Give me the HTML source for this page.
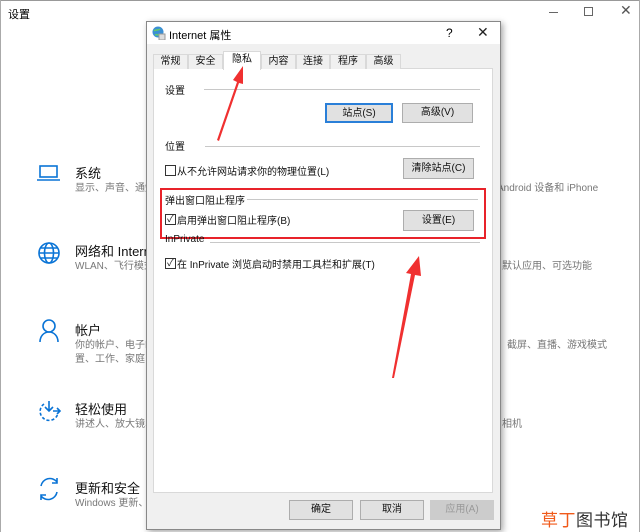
<!DOCTYPE html>
<html><head><meta charset="utf-8"><style>
*{margin:0;padding:0;box-sizing:border-box}
body{width:640px;height:532px;overflow:hidden;background:#fff;font-family:"Liberation Sans","Noto Sans CJK SC",sans-serif;position:relative;color:#000}
.a{position:absolute;white-space:nowrap}
.t{font-size:13px;color:#111}
.s{font-size:10px;color:#777}
.d{font-size:10px;color:#111}
.btn{position:absolute;background:#e1e1e1;border:1px solid #adadad;font-size:10px;text-align:center;color:#111}
.line{position:absolute;height:1px;background:#c8c8c8}
.tab{position:absolute;top:54px;height:15px;border:1px solid #d9d9d9;border-bottom:none;background:#f0f0f0;font-size:10px;text-align:center;line-height:14px;color:#111}
.cb{position:absolute;width:11px;height:11px;border:1px solid #333;background:#fff;font-size:10px;line-height:9px;text-align:center;color:#222}
</style></head><body>
<div class="a" style="left:0;top:0;width:640px;height:1px;background:#999"></div>
<div class="a" style="left:0;top:0;width:1px;height:532px;background:#aaa"></div>
<div class="a" style="left:639px;top:0;width:1px;height:532px;background:#aaa"></div>
<div class="a" style="left:8px;top:6px;font-size:11px">设置</div>
<div class="a" style="left:549px;top:12px;width:9px;height:1px;background:#666"></div>
<div class="a" style="left:584px;top:7px;width:9px;height:9px;border:1px solid #666"></div>
<div class="a" style="left:620px;top:2px;font-size:14px;color:#555">✕</div>

<svg class="a" style="left:36px;top:160px" width="28" height="360" fill="none" stroke="#0a74d6" stroke-width="1.6">
<rect x="4" y="6" width="17" height="11"/><path d="M1 20h23"/>
<g transform="translate(0,80)"><circle cx="13" cy="13" r="10"/><ellipse cx="13" cy="13" rx="4.5" ry="10"/><path d="M3 13h20M5 8h16M5 18h16"/></g>
<g transform="translate(0,158)"><circle cx="13" cy="8" r="6"/><path d="M4 24c0-6 4-10 9-10s9 4 9 10"/></g>
<g transform="translate(0,237)"><path d="M13 4v10M9 10l4 4 4-4M17 14h7M21 11l3 3-3 3"/><path d="M8 7a9 9 0 1 0 14 9" stroke-dasharray="3 2"/></g>
<g transform="translate(0,316)"><path d="M5 10a9 9 0 0 1 16-4M21 2v5h-5M21 16a9 9 0 0 1-16 4M5 24v-5h5"/></g>
</svg>
<div class="a t" style="left:75px;top:163px">系统</div>
<div class="a s" style="left:75px;top:179px">显示、声音、通知</div>
<div class="a t" style="left:75px;top:241px">网络和 Internet</div>
<div class="a s" style="left:75px;top:257px">WLAN、飞行模式</div>
<div class="a t" style="left:75px;top:320px">帐户</div>
<div class="a s" style="left:75px;top:336px">你的帐户、电子邮</div>
<div class="a s" style="left:75px;top:350px">置、工作、家庭</div>
<div class="a t" style="left:75px;top:399px">轻松使用</div>
<div class="a s" style="left:75px;top:415px">讲述人、放大镜、</div>
<div class="a t" style="left:75px;top:478px">更新和安全</div>
<div class="a s" style="left:75px;top:494px">Windows 更新、</div>

<div class="a s" style="left:497px;top:179px">Android 设备和 iPhone</div>
<div class="a s" style="left:502px;top:257px">默认应用、可选功能</div>
<div class="a s" style="left:497px;top:336px">、截屏、直播、游戏模式</div>
<div class="a s" style="left:502px;top:415px">相机</div>
<div class="a" style="left:541px;top:511px;font-size:17px;line-height:20px;letter-spacing:0.5px"><span style="color:#f05a1a">草丁</span><span style="color:#333">图书馆</span></div>

<div class="a" style="left:146px;top:21px;width:355px;height:509px;background:#f0f0f0;border:1px solid #888;box-shadow:2px 2px 6px rgba(0,0,0,.35)"></div>
<div class="a" style="left:147px;top:22px;width:353px;height:22px;background:#fff"></div>
<svg class="a" style="left:152px;top:26px" width="14" height="14"><circle cx="6" cy="6" r="5.5" fill="#3b8fd4"/><path d="M2 5c2-2 4 0 6-2M3 9c2-1 3 1 5-1" stroke="#6c6" stroke-width="1.5" fill="none"/><rect x="7" y="8" width="6" height="6" fill="#ddd" stroke="#999"/></svg>
<div class="a" style="left:169px;top:27px;font-size:11px">Internet 属性</div>
<div class="a" style="left:446px;top:26px;font-size:12px">?</div>
<div class="a" style="left:477px;top:24px;font-size:14px;color:#222">✕</div>

<div class="a" style="left:153px;top:68px;width:340px;height:425px;background:#fff;border:1px solid #d9d9d9"></div>
<div class="tab" style="left:153px;width:35px">常规</div>
<div class="tab" style="left:188px;width:35px">安全</div>
<div class="tab" style="left:261px;width:35px">内容</div>
<div class="tab" style="left:296px;width:34px">连接</div>
<div class="tab" style="left:330px;width:36px">程序</div>
<div class="tab" style="left:366px;width:35px">高级</div>
<div class="tab" style="left:223px;top:51px;width:38px;height:19px;background:#fff;line-height:16px">隐私</div>

<div class="a d" style="left:165px;top:82px">设置</div>
<div class="line" style="left:204px;top:89px;width:276px"></div>
<div class="btn" style="left:325px;top:103px;width:68px;height:20px;line-height:18px;border:2px solid #2a7fd8">站点(S)</div>
<div class="btn" style="left:402px;top:103px;width:71px;height:20px;line-height:18px">高级(V)</div>
<div class="a d" style="left:165px;top:138px">位置</div>
<div class="line" style="left:205px;top:146px;width:275px"></div>
<div class="cb" style="left:165px;top:165px"></div>
<div class="a d" style="left:177px;top:163px">从不允许网站请求你的物理位置(L)</div>
<div class="btn" style="left:403px;top:158px;width:71px;height:21px;line-height:19px">清除站点(C)</div>
<div class="a d" style="left:165px;top:192px">弹出窗口阻止程序</div>
<div class="line" style="left:247px;top:199px;width:231px"></div>
<div class="cb" style="left:165px;top:214px">✓</div>
<div class="a d" style="left:177px;top:212px">启用弹出窗口阻止程序(B)</div>
<div class="btn" style="left:403px;top:210px;width:71px;height:21px;line-height:19px">设置(E)</div>
<div class="a" style="left:160px;top:188px;width:326px;height:51px;border:2px solid #e8232a"></div>
<div class="a d" style="left:165px;top:234px">InPrivate</div>
<div class="line" style="left:210px;top:242px;width:270px"></div>
<div class="cb" style="left:165px;top:258px">✓</div>
<div class="a d" style="left:177px;top:256px">在 InPrivate 浏览启动时禁用工具栏和扩展(T)</div>

<div class="btn" style="left:289px;top:500px;width:64px;height:20px;line-height:18px">确定</div>
<div class="btn" style="left:360px;top:500px;width:64px;height:20px;line-height:18px">取消</div>
<div class="btn" style="left:430px;top:500px;width:64px;height:20px;line-height:18px;color:#999;border-color:#ccc;background:#ccc">应用(A)</div>

<svg class="a" style="left:0;top:0" width="640" height="532">
<path d="M217 140 L237 82 L233 80 L243 66 L243 84 L239 83 L219 141Z" fill="#f03030"/>
<path d="M392 378 L411 274 L406 273 L419 256 L421 276 L415 275 L394 378Z" fill="#f03030"/>
</svg>
</body></html>
